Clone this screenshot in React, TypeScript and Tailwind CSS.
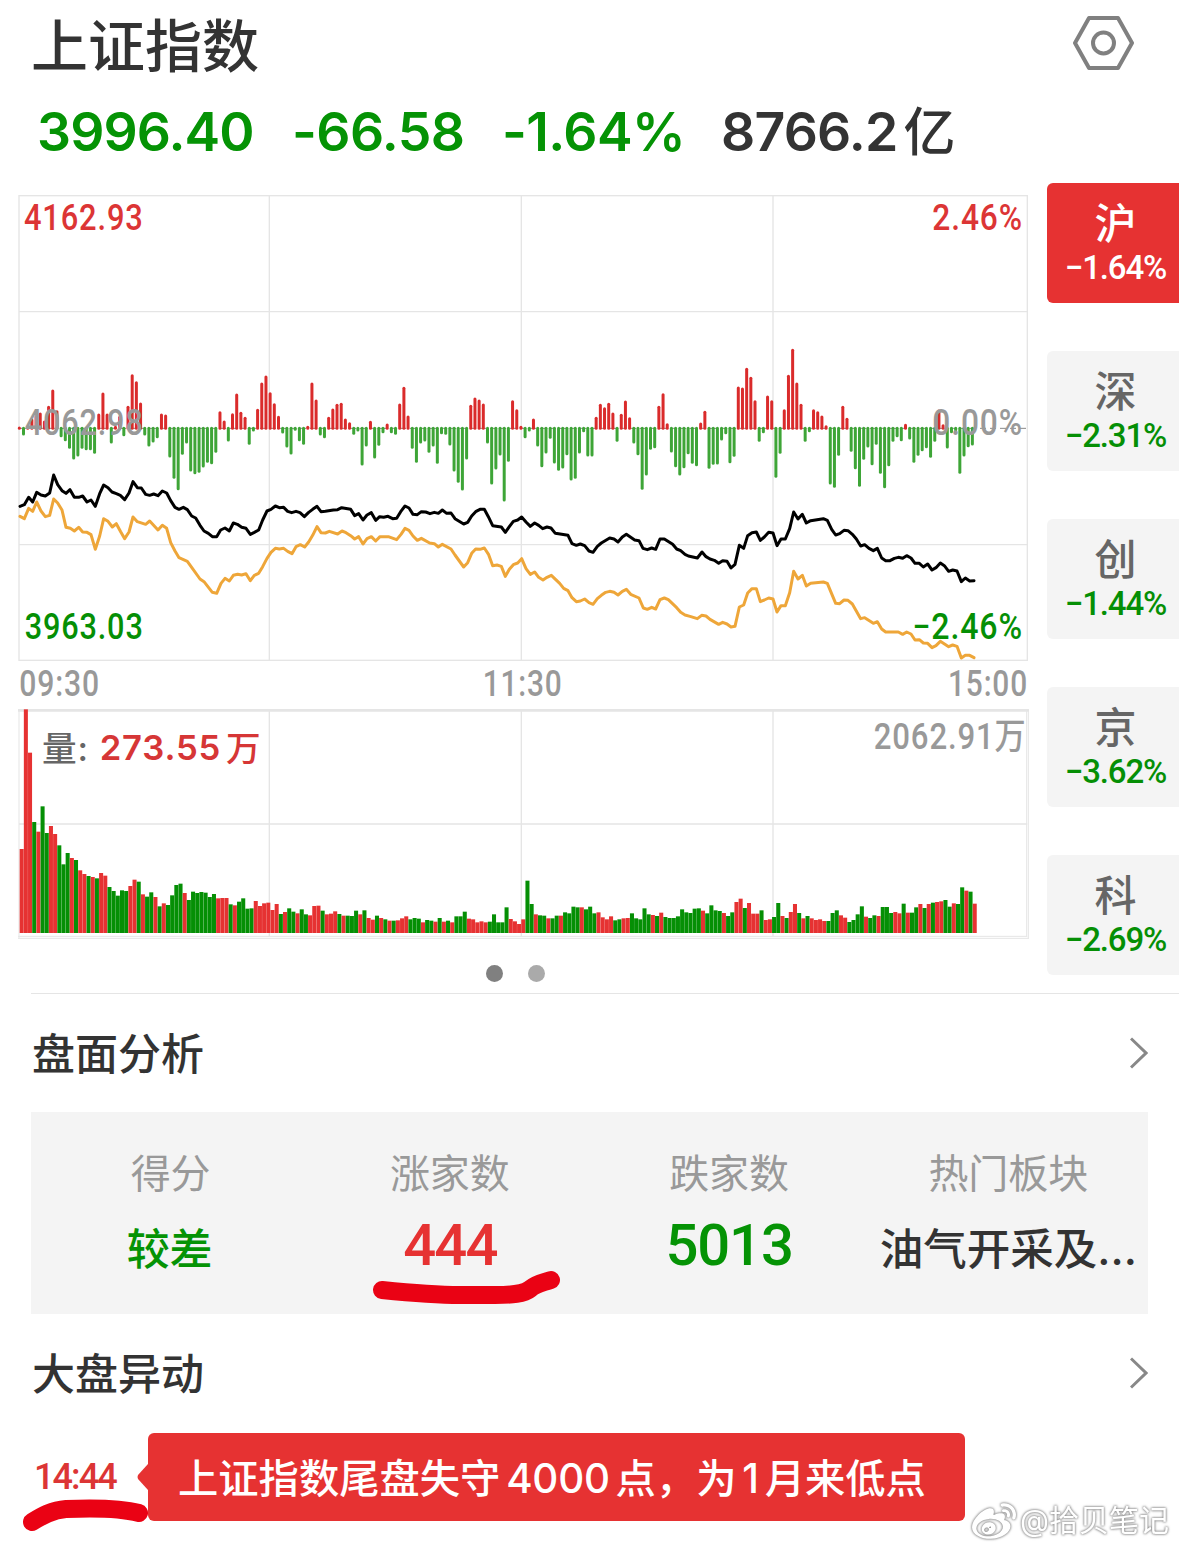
import { SiSinaweibo } from "react-icons/si"
import { clsx } from "clsx"

const RED = "#e63232"
const GREEN = "#058f05"
const GRID = "#e5e5e5"

const STEP = 12.54
const ZERO_Y = 265

// bar tips per minute, smaller than ZERO_Y = rising
const momentum = [
  264, 282, 264, 240, 230, 222, 246, 202, 153, 215, 287, 299, 322, 354, 345, 322, 326, 326, 337, 225,
  162, 225, 306, 262, 232, 284, 202, 107, 128, 192, 282, 315, 303, 290, 225, 228, 348, 412, 446, 340,
  306, 390, 398, 394, 378, 364, 368, 334, 218, 246, 300, 224, 165, 220, 235, 310, 270, 211, 132, 111,
  161, 194, 232, 276, 318, 339, 268, 299, 310, 262, 132, 183, 282, 290, 235, 210, 196, 193, 240, 251,
  280, 270, 372, 315, 247, 351, 313, 275, 255, 275, 280, 195, 145, 231, 322, 364, 306, 300, 334, 315,
  367, 278, 280, 312, 390, 424, 447, 354, 199, 177, 183, 195, 306, 429, 384, 342, 480, 361, 185, 212,
  262, 290, 270, 240, 315, 377, 336, 292, 366, 388, 381, 341, 417, 412, 336, 272, 345, 345, 235, 196,
  206, 193, 222, 301, 226, 186, 236, 306, 341, 445, 402, 325, 320, 202, 164, 254, 333, 377, 402, 380,
  338, 367, 374, 252, 217, 382, 370, 369, 297, 278, 365, 346, 144, 147, 88, 115, 185, 301, 275, 171,
  185, 409, 337, 212, 109, 31, 132, 196, 301, 272, 212, 218, 231, 260, 429, 439, 343, 202, 238, 331,
  383, 436, 355, 318, 371, 310, 397, 440, 374, 301, 287, 299, 256, 294, 364, 343, 329, 320, 349, 301,
  213, 257, 321, 275, 270, 397, 345, 317, 312,
]

// positive = up minute, negative = down minute
const volume = [
  252, 671, 541, -333, 304, -380, -300, 321, 297, -263,
  -206, -240, 225, -219, 188, 177, -171, 168, -164, 180,
  172, -138, -126, -112, -128, -126, 141, 160, -154, 116,
  -109, -122, 108, -80, 89, -84, -113, -144, -148, 120,
  -99, -124, -120, -123, -121, -108, -117, 104, 105, 105,
  -86, 83, -94, -104, -73, -74, 96, 81, 89, 91,
  69, 87, -57, 63, -74, -64, 59, -71, -56, 53,
  81, 82, -67, 56, 58, 65, -57, 52, -52, -51,
  -67, 56, -68, 45, 40, -52, 45, -41, 37, -37,
  38, 44, 50, -41, -45, -43, 32, -39, -37, 34,
  -45, 34, -37, 32, -50, -50, -64, 43, 41, 32,
  35, 32, -34, -56, -32, -32, -77, 42, 35, 27,
  41, -157, -87, 56, -53, -52, 44, -44, -52, 52,
  -62, -59, -79, -77, 77, -71, -79, -59, 62, 47,
  41, 50, -38, -41, 44, 45, -59, -44, -41, -74,
  -56, 54, -51, 61, -48, -45, -45, -50, -71, -62,
  -60, -73, -74, 67, -59, -83, -68, -66, 60, -51,
  -62, 93, 103, -75, 90, 58, 58, -68, 39, 41,
  -48, -90, 51, -45, 63, 87, -60, 44, -51, 44,
  39, 41, 36, -36, -60, -68, 53, 46, -33, -39,
  -56, -80, 49, -45, -53, 51, -78, -78, -60, 63,
  59, -88, 61, -61, -77, 87, -75, 87, -91, 93,
  95, -99, -79, 89, -87, -137, 127, -124, 88,
]

const indexLine =
  "60,499 73,494 86,472 98,486 110,457 123,465 136,468 149,459 161,405 173,434 186,452 198,460 210,449 223,472 236,472 248,468 261,486 273,480 286,499 299,461 311,435 324,443 336,456 349,461 361,466 374,479 387,459 399,425 412,443 424,444 437,463 449,466 461,462 474,467 487,453 500,459 512,482 525,502 537,508 550,502 562,509 575,528 587,534 600,556 612,573 625,580 637,590 650,590 662,570 675,564 688,573 700,549 712,553 725,562 738,565 751,583 763,577 776,570 788,540 801,513 813,508 826,498 838,503 851,502 863,514 875,518 888,514 900,518 913,530 926,517 938,508 951,499 963,515 976,514 1000,510 1013,509 1025,503 1052,508 1064,527 1076,521 1089,540 1101,525 1114,518 1127,541 1139,530 1151,532 1164,529 1178,536 1190,535 1202,515 1215,498 1227,504 1239,523 1252,524 1264,515 1277,516 1290,521 1303,517 1315,520 1327,510 1340,520 1353,519 1365,536 1391,552 1403,547 1415,528 1427,515 1440,508 1453,508 1465,530 1478,557 1504,561 1516,577 1528,560 1540,544 1553,540 1565,531 1578,546 1591,559 1604,549 1616,556 1628,566 1641,561 1653,564 1666,580 1704,586 1716,611 1729,616 1741,612 1754,617 1767,633 1779,637 1792,619 1804,609 1829,594 1842,597 1854,606 1867,591 1879,583 1904,600 1917,602 1929,625 1942,629 1955,624 1967,628 1980,597 1993,597 2018,613 2030,627 2042,632 2055,643 2065,648 2092,654 2106,636 2118,650 2130,657 2143,661 2156,670 2168,662 2181,664 2193,684 2205,673 2218,616 2231,625 2243,587 2256,578 2269,576 2281,601 2293,591 2306,577 2319,579 2331,617 2343,597 2356,597 2369,566 2381,516 2394,537 2407,523 2419,549 2432,542 2470,536 2482,541 2495,568 2507,585 2519,581 2532,571 2544,572 2557,583 2569,597 2582,618 2594,614 2607,625 2620,632 2632,625 2645,654 2657,662 2670,662 2683,655 2695,652 2708,655 2720,647 2733,654 2745,670 2758,670 2770,681 2783,672 2796,690 2808,683 2821,669 2833,677 2846,694 2858,690 2871,693 2884,725 2896,714 2909,723 2922,722"

const averageLine =
  "60,529 73,536 86,505 98,514 110,486 123,513 136,530 149,526 161,477 173,489 186,510 198,562 211,565 223,573 236,562 248,576 261,577 273,584 286,628 299,588 311,536 324,544 337,561 349,551 362,575 374,596 387,576 399,531 412,545 437,553 449,543 474,570 487,556 500,565 512,608 525,633 537,653 562,664 575,682 600,717 612,725 637,757 650,760 663,730 675,715 688,723 700,706 713,703 725,705 738,701 751,722 763,706 776,700 788,680 801,655 813,637 826,625 838,627 851,625 863,634 876,641 888,620 901,614 914,621 926,606 938,586 951,560 963,578 976,579 988,574 1013,582 1026,573 1038,578 1052,587 1064,597 1076,590 1089,612 1101,596 1114,590 1127,603 1140,590 1165,590 1190,599 1203,583 1215,565 1227,571 1239,588 1252,601 1264,595 1289,609 1303,611 1315,621 1327,613 1353,627 1365,645 1391,681 1403,668 1415,640 1427,627 1440,628 1453,624 1466,644 1478,677 1491,675 1504,679 1516,709 1528,688 1540,674 1553,669 1565,656 1578,686 1591,703 1604,696 1616,712 1629,720 1641,712 1654,706 1679,730 1691,745 1704,752 1716,773 1729,785 1741,783 1754,777 1767,788 1779,793 1792,776 1804,766 1817,757 1829,754 1842,757 1854,765 1867,754 1879,748 1892,763 1917,774 1930,804 1942,808 1955,802 1967,807 1980,779 1993,774 2005,779 2030,803 2042,817 2055,825 2070,829 2092,836 2105,826 2118,828 2130,838 2156,853 2168,847 2181,852 2193,861 2205,859 2218,801 2231,795 2243,759 2256,746 2269,746 2281,785 2293,780 2306,774 2319,777 2331,816 2343,797 2356,797 2369,758 2381,694 2394,717 2407,706 2419,738 2432,730 2470,726 2482,730 2507,790 2519,791 2532,780 2544,781 2557,792 2582,836 2594,833 2620,850 2632,845 2645,867 2657,876 2695,876 2708,883 2720,876 2733,882 2745,900 2758,899 2770,909 2783,910 2796,923 2808,917 2821,904 2846,920 2858,915 2871,919 2884,954 2896,946 2909,946 2922,953"

const quotes = [
  { value: "3996.40", className: "w-[255px] tracking-[-0.9px]" },
  { value: "-66.58", className: "w-[210px] tracking-[-0.6px]" },
  { value: "-1.64%", className: "w-[219px] tracking-[-0.6px]" },
]

const markets = [
  { name: "沪", change: "−1.64%", active: true },
  { name: "深", change: "−2.31%" },
  { name: "创", change: "−1.44%" },
  { name: "京", change: "−3.62%" },
  { name: "科", change: "−2.69%" },
]

interface LabelProps {
  x: number
  y: number
  width: number
  color: string
  children: string
}

function ChartLabel({ x, y, width, color, children }: LabelProps) {
  return (
    <text
      x={x}
      y={y}
      fill={color}
      fontSize="108"
      textLength={width}
      lengthAdjust="spacingAndGlyphs"
      className="font-[Roboto,'Noto_Sans_CJK_SC',sans-serif] font-medium tracking-[3px]"
    >
      {children}
    </text>
  )
}

function PriceChart() {
  return (
    <svg viewBox="54 -435 3033 1398" className="block h-[466px] w-[1011px] overflow-visible">
      <g stroke={GRID} strokeWidth="4" fill="none">
        <rect x="57" y="-433" width="3025" height="1394" />
        <path d="M808 -433V961M1564 -433V961M2319 -433V961M57 -85H3082M57 614H3082" />
      </g>
      <path d={`M60 ${ZERO_Y}H3082`} stroke="#888" strokeWidth="3" strokeDasharray="18 12" />
      <g strokeWidth="9" strokeLinecap="round">
        {momentum.map((tip, i) => (
          <path
            key={i}
            d={`M${(58 + i * STEP).toFixed(1)} ${ZERO_Y}V${tip}`}
            stroke={tip < ZERO_Y ? "#da2b2b" : "#3ea537"}
          />
        ))}
      </g>
      <polyline points={averageLine} fill="none" stroke="#eea639" strokeWidth="9" strokeLinejoin="round" strokeLinecap="round" />
      <polyline points={indexLine} fill="none" stroke="#000" strokeWidth="9" strokeLinejoin="round" strokeLinecap="round" />
      <ChartLabel x={72} y={-330} width={359} color="#dc3535">4162.93</ChartLabel>
      <ChartLabel x={2797} y={-330} width={272} color="#dc3535">2.46%</ChartLabel>
      <ChartLabel x={74} y={284} width={357} color="#999">4062.98</ChartLabel>
      <ChartLabel x={2797} y={284} width={272} color="#999">0.00%</ChartLabel>
      <ChartLabel x={74} y={897} width={357} color={GREEN}>3963.03</ChartLabel>
      <ChartLabel x={2737} y={897} width={332} color={GREEN}>−2.46%</ChartLabel>
    </svg>
  )
}

function VolumeChart() {
  return (
    <svg viewBox="54 147 3033 690" className="block h-[230px] w-[1011px] overflow-visible">
      <g stroke={GRID} fill="none">
        <path d="M54 151H3087" strokeWidth="8" />
        <path d="M54 829H3082M54 835H3087M57 151V835M3080 151V829M3085 151V835" strokeWidth="3" />
        <path d="M808 151V829M1564 151V829M2319 151V829M57 492H3082" strokeWidth="4" />
      </g>
      {volume.map((v, i) => (
        <rect
          key={i}
          x={59 + i * STEP}
          y={819 - Math.abs(v)}
          width="12.1"
          height={Math.abs(v)}
          fill={v > 0 ? RED : GREEN}
        />
      ))}
      <g className="font-[Inter,'Noto_Sans_CJK_SC',sans-serif] font-medium" fontSize="104">
        <text x="126" y="303" fill="#666" textLength="138">
          量:
        </text>
        <g fill="#d63636">
          <text x="299" y="300" textLength="362" className="font-semibold">
            273.55
          </text>
          <text x="678" y="304">
            万
          </text>
        </g>
      </g>
      <ChartLabel x={2621} y={267} width={459} color="#999">2062.91万</ChartLabel>
    </svg>
  )
}

function SectionTitle({ children }: { children: string }) {
  return (
    <div className="flex items-start justify-between pl-8 pr-[31px]">
      <h2 className="text-[43px] leading-[58px] font-medium text-[#333]">{children}</h2>
      <svg viewBox="0 0 18 32" className="mt-3 h-8 w-[18px]" fill="none" stroke="#888" strokeWidth="3">
        <path d="M1 1.5L16 16L1 30.5" />
      </svg>
    </div>
  )
}

interface StatProps {
  label: string
  value: string
  className: string
}

function Stat({ label, value, className }: StatProps) {
  return (
    <div className="flex flex-col items-center whitespace-nowrap">
      <span className="text-[40px] leading-[64px] text-[#999]">{label}</span>
      <span className={clsx("font-medium", className)}>{value}</span>
    </div>
  )
}

export default function App() {
  return (
    <div className="relative h-[1549px] w-[1179px] overflow-hidden bg-white font-[Inter,'Noto_Sans_CJK_SC',sans-serif] text-[#333]">
      <header className="h-[183px]">
        <div className="flex h-[88px] items-start justify-between pl-[31px] pr-[45px]">
          <h1 className="text-[57px] leading-[94px] font-medium">上证指数</h1>
          <svg viewBox="0 0 62 56" className="mt-[15px] h-14 w-[62px]" fill="none" stroke="#808080" strokeWidth="4" strokeLinejoin="round">
            <path d="M17 3H46L60 28L46 53H17L3 28Z" />
            <circle cx="31.5" cy="28" r="10.5" />
          </svg>
        </div>
        <div className="flex h-[88px] items-center pl-[37px] text-[53.5px] font-semibold whitespace-nowrap text-[#059305]">
          {quotes.map((q) => (
            <span key={q.value} className={q.className}>{q.value}</span>
          ))}
          <span className="tracking-[-0.8px] text-[#333]">
            8766.2<span className="ml-[6px] text-[52px] font-medium">亿</span>
          </span>
        </div>
      </header>

      <main className="flex h-[810px] justify-between">
        <div className="w-[1011px] ml-[18px] pt-3">
          <PriceChart />
          <svg viewBox="54 0 3033 144" className="block h-12 w-[1011px] overflow-visible">
            <ChartLabel x={58} y={105} width={242} color="#999">09:30</ChartLabel>
            <ChartLabel x={1448} y={105} width={240} color="#999">11:30</ChartLabel>
            <ChartLabel x={2844} y={105} width={240} color="#999">15:00</ChartLabel>
          </svg>
          <VolumeChart />
          <div className="flex justify-center gap-[25px] pt-[26px] pr-4">
            <span className="h-[17px] w-[17px] rounded-full bg-[#808080]" />
            <span className="h-[17px] w-[17px] rounded-full bg-[#aaa]" />
          </div>
        </div>
        <nav className="flex w-[132px] flex-col gap-12">
          {markets.map((m) => (
            <button
              key={m.name}
              className={clsx(
                "flex h-[120px] w-full flex-col items-center rounded-l-md pt-[10px] pl-[5px]",
                m.active ? "bg-[#e63232] text-white" : "bg-[#f4f4f4] text-[#666]"
              )}
            >
              <span className="text-[42px] leading-[61px] font-medium">{m.name}</span>
              <span
                className={clsx(
                  "-mt-1 font-[Roboto,sans-serif] text-[33px] leading-9 font-medium tracking-[-1.2px]",
                  !m.active && "text-[#058f05]"
                )}
              >
                {m.change}
              </span>
            </button>
          ))}
        </nav>
      </main>

      <section className="ml-[31px] border-t border-[#e5e5e5]" />
      <section className="pt-[31px]">
        <SectionTitle>盘面分析</SectionTitle>
        <div className="mx-[31px] mt-[29px] grid h-[202px] grid-cols-4 bg-[#f4f4f4] pt-[30px]">
          <Stat label="得分" value="较差" className="mt-[11px] -ml-0.5 text-[43px] leading-[64px] text-[#059305]" />
          <Stat label="涨家数" value="444" className="mt-[7px] font-[Roboto] text-[58px] leading-[64px] tracking-[-1.8px] text-[#e63232]" />
          <Stat label="跌家数" value="5013" className="mt-[7px] font-[Roboto] text-[58px] leading-[64px] tracking-[-1.2px] text-[#059305]" />
          <Stat label="热门板块" value="油气开采及..." className="mt-[11px] text-[43.5px] leading-[64px] text-[#333]" />
        </div>
      </section>

      <section className="pt-[31px]">
        <SectionTitle>大盘异动</SectionTitle>
        <div className="mt-[30px] flex h-[88px] items-center pl-[34px]">
          <span className="w-[103px] font-[Roboto] text-[36px] leading-[40px] font-medium tracking-[-1.9px] text-[#dc3535]">14:44</span>
          <svg viewBox="0 0 11 26" className="h-[26px] w-[11px] fill-[#e63232]">
            <path d="M11 0V26L1 15Q0 13 1 11Z" />
          </svg>
          <div className="flex h-[88px] w-[817px] items-center rounded-md bg-[#e63232] pt-1 pl-[30px] text-[40.3px] font-medium whitespace-nowrap text-white">
            <p className="[word-spacing:-5px]">
              上证指数尾盘失守 <span className="tracking-[-0.2px]">4000</span> 点，为 1 月来低点
            </p>
          </div>
        </div>
      </section>

      {/* hand-drawn marks */}
      <svg viewBox="0 0 1179 1549" className="pointer-events-none absolute inset-0 h-full w-full" fill="none" stroke="#ea0214" strokeWidth="18" strokeLinecap="round" strokeLinejoin="round">
        <path d="M382 1290C412 1293 435 1295 460 1295H495C512 1295 524 1294 530 1289C537 1283 542 1283 551 1280" />
        <path d="M32 1522C42 1516 52 1510 66 1509C90 1508 120 1508 139 1513" />
      </svg>

      <div className="absolute right-[10px] bottom-[6px] flex items-center gap-1 text-[30px] text-white [filter:drop-shadow(0_0_1px_#888)_drop-shadow(0_0_1px_#aaa)]">
        <SiSinaweibo className="h-11 w-11" />
        <span>@拾贝笔记</span>
      </div>
    </div>
  )
}
